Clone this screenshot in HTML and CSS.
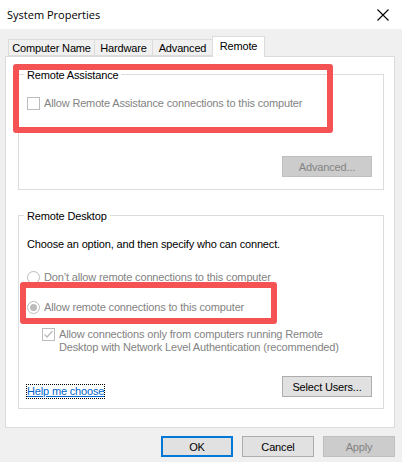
FILE: index.html
```html
<!DOCTYPE html>
<html lang="en">
<head>
  <meta charset="UTF-8" />
  <meta name="viewport" content="width=device-width, initial-scale=1.0"/>
  <title>System Properties</title>
  <link rel="stylesheet" href="styles.css">
</head>
<body>
  <div class="window">
    <div class="titlebar">
      <span class="title">System Properties</span>
      <svg class="close" width="12" height="12" viewBox="0 0 12 12">
        <path d="M0.5 0.5 L11.5 11.5 M11.5 0.5 L0.5 11.5" stroke="#000" stroke-width="1.1" fill="none"/>
      </svg>
    </div>

    <div class="content">
      <div class="tabs">
        <div class="tab tab-name">Computer Name</div>
        <div class="tab tab-hw">Hardware</div>
        <div class="tab tab-adv">Advanced</div>
        <div class="tab active">Remote</div>
      </div>

      <div class="panel">
        <div class="group group-assist">
          <div class="group-title">Remote Assistance</div>
          <label class="option disabled first">
            <span class="box"></span>
            Allow Remote Assistance connections to this computer
          </label>
          <div class="row-right">
            <button class="btn disabled">Advanced...</button>
          </div>
          <div class="highlight hl-assist"></div>
        </div>

        <div class="group group-desktop">
          <div class="group-title">Remote Desktop</div>
          <p class="intro">Choose an option, and then specify who can connect.</p>
          <label class="option disabled radio-row">
            <span class="radio"></span>
            Don’t allow remote connections to this computer
          </label>
          <label class="option disabled radio-row second">
            <span class="radio checked"></span>
            Allow remote connections to this computer
          </label>
          <label class="option disabled nla">
            <span class="box checked">
              <svg width="11" height="11" viewBox="0 0 11 11">
                <path d="M1.5 5.5 L4 8 L9.5 2" stroke="#bcbcbc" stroke-width="1.3" fill="none"/>
              </svg>
            </span>
            <span>Allow connections only from computers running Remote<br>Desktop with Network Level Authentication (recommended)</span>
          </label>
          <div class="row-split">
            <a href="#" class="help">Help me choose</a>
            <button class="btn">Select Users...</button>
          </div>
          <div class="highlight hl-desktop"></div>
        </div>
      </div>

      <div class="footer">
        <button class="btn default">OK</button>
        <button class="btn">Cancel</button>
        <button class="btn disabled">Apply</button>
      </div>
    </div>
  </div>
</body>
</html>
```

FILE: styles.css
```css
:root {
  --fundo: #f0f0f0;
  --borda: #dcdcdc;
  --cinza: #838383;
  --vermelho: #f55254;
}

* {
  box-sizing: border-box;
}

body {
  margin: 0;
  font-family: 'Liberation Sans', Arial, sans-serif;
  font-size: 11px;
  letter-spacing: -0.16px;
  color: #000;
  background-color: var(--fundo);
}

.window {
  width: 402px;
  height: 462px;
  overflow: hidden;
}

.titlebar {
  height: 29px;
  background-color: #fff;
  display: flex;
  align-items: center;
  justify-content: space-between;
  padding: 0 13px 0 7px;
}

.title {
  font-family: 'Open Sans', 'Liberation Sans', sans-serif;
  font-size: 11px;
  letter-spacing: 0;
}

.content {
  padding: 7px 7px 0 5px;
}

.tabs {
  display: flex;
  align-items: flex-end;
  padding-left: 3px;
  height: 20px;
}

.tab {
  height: 17px;
  line-height: 16px;
  text-align: center;
  border: 1px solid var(--borda);
  border-right: none;
  background-color: var(--fundo);
}

.tab-name {
  width: 86px;
}

.tab-hw {
  width: 58px;
}

.tab-adv {
  width: 60px;
}

.tab.active {
  width: 53px;
  height: 21px;
  line-height: 18px;
  border-right: 1px solid var(--borda);
  border-bottom: none;
  background-color: #fff;
  margin-bottom: -1px;
  position: relative;
  z-index: 1;
}

.panel {
  height: 372px;
  border: 1px solid var(--borda);
  background-color: #fff;
  padding: 17px 10px 0 12px;
}

.group {
  position: relative;
  border: 1px solid var(--borda);
  padding: 0 11px 0 8px;
}

.group-assist {
  height: 116px;
}

.group-desktop {
  height: 194px;
  margin-top: 25px;
}

.group-title {
  display: inline-block;
  background-color: #fff;
  margin: -6px 0 0 -3px;
  padding: 0 3px;
  line-height: 13px;
  vertical-align: top;
}

.option {
  display: flex;
  align-items: center;
  gap: 4px;
  line-height: 13px;
}

.option.disabled {
  color: var(--cinza);
}

.option.first {
  margin-top: 10px;
}

.box {
  width: 13px;
  height: 13px;
  border: 1px solid #bcbcbc;
  background-color: #fff;
  flex-shrink: 0;
  display: flex;
  align-items: center;
  justify-content: center;
}

.radio {
  width: 13px;
  height: 13px;
  border: 1px solid #bcbcbc;
  border-radius: 50%;
  flex-shrink: 0;
  display: flex;
  align-items: center;
  justify-content: center;
}

.radio.checked::after {
  content: "";
  width: 7px;
  height: 7px;
  border-radius: 50%;
  background-color: #bcbcbc;
}

.row-right {
  display: flex;
  justify-content: flex-end;
  margin-top: 46px;
}

.btn {
  width: 90px;
  height: 21px;
  font-family: inherit;
  font-size: 11px;
  letter-spacing: inherit;
  color: #000;
  background-color: #e1e1e1;
  border: 1px solid #adadad;
  padding: 0;
}

.btn.disabled {
  color: var(--cinza);
  background-color: #cccccc;
  border-color: #bfbfbf;
}

.btn.default {
  border: 2px solid #0078d7;
}

.intro {
  margin: 10px 0 0;
  line-height: 13px;
}

.radio-row {
  margin-top: 20px;
}

.radio-row.second {
  margin-top: 17px;
}

.nla {
  align-items: flex-start;
  padding-left: 15px;
  margin-top: 14px;
}

.row-split {
  display: flex;
  justify-content: space-between;
  align-items: flex-end;
  margin-top: 22px;
}

.help {
  color: #0066cc;
  text-decoration: underline;
  outline: 1px dotted #000;
  line-height: 13px;
  margin-bottom: -1px;
}

.footer {
  display: flex;
  justify-content: flex-end;
  gap: 9px;
  margin-top: 8px;
}

.footer .btn {
  width: 72px;
}

.highlight {
  position: absolute;
  border: 6px solid var(--vermelho);
  border-radius: 3px;
  pointer-events: none;
}

.hl-assist {
  left: -6px;
  top: -11px;
  width: 320px;
  height: 69px;
}

.hl-desktop {
  left: 1px;
  top: 66px;
  width: 257px;
  height: 42px;
}
```
